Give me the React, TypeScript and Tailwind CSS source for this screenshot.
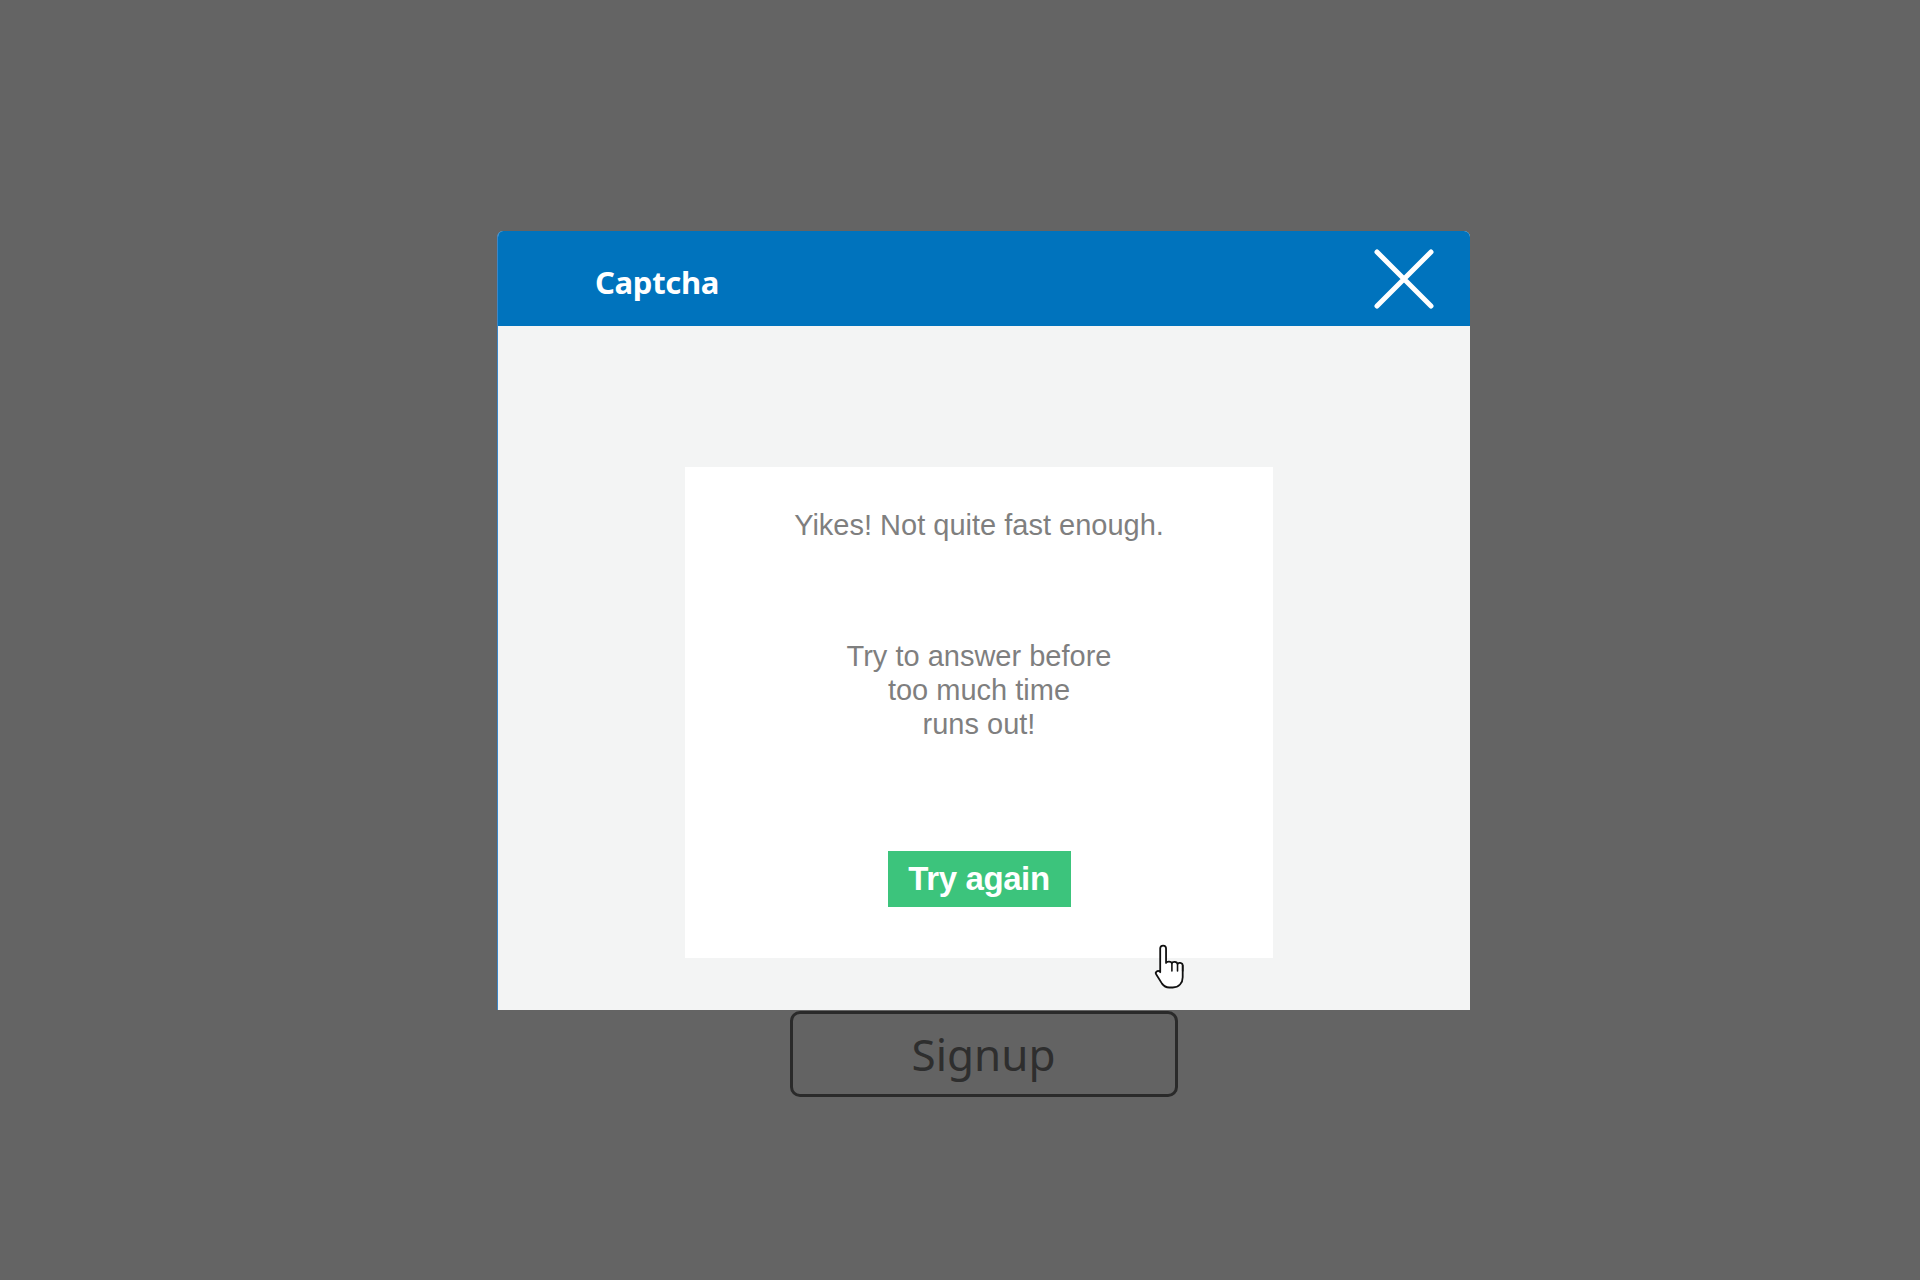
import React from "react";

function HandCursor() {
    return (
        <svg width="36" height="50" viewBox="0 0 16 22" className="absolute left-[1153px] top-[942px]">
            <path
                d="M4.5 1.5c.8 0 1.3.6 1.3 1.3v6.4c.2-.8 2.4-.9 2.6.2.2-.9 2.3-.9 2.5.3.3-.8 2.2-.7 2.3.6v5.2c0 2.6-1.7 4.6-4.4 4.6H7.2c-1.4 0-2.4-.6-3.2-1.7L1.4 14.2c-.6-.9.7-2 1.6-1.1l.2.2V2.8c0-.7.5-1.3 1.3-1.3z"
                fill="#fff"
                stroke="#111"
                strokeWidth="0.8"
                strokeLinejoin="round"
            />
            <path d="M8.4 9.6v3.2M10.9 10v2.8M13.2 10.4v2.4" stroke="#111" strokeWidth="0.7" strokeLinecap="round" />
        </svg>
    );
}

export default function App() {
    return (
        <div className="relative min-h-[1280px] w-full bg-[#646464] overflow-hidden">
            <div className="ml-[497px] w-[973px] pt-[231px] flex flex-col items-center">
                {/* Captcha dialog */}
                <div className="w-full rounded-t-[6px] overflow-hidden bg-[#f3f4f4] border-l border-[#3d86c6]">
                    <div className="h-[95px] bg-[#0073bd] flex items-center justify-between pl-[97px] pr-[36px]">
                        <span className="pt-[8px] text-white text-[31px] font-bold tracking-[-0.3px] font-['Noto_Sans','Open_Sans',sans-serif]">
                            Captcha
                        </span>
                        <svg width="60" height="60" viewBox="0 0 60 60">
                            <path d="M3 3L57 57M57 3L3 57" stroke="#fff" strokeWidth="5" strokeLinecap="round" />
                        </svg>
                    </div>
                    <div className="h-[684px] pt-[141px] pl-[187px]">
                        <div className="w-[588px] h-[491px] bg-white flex flex-col items-center text-[#7f7f7f] font-['Liberation_Sans',Arial,sans-serif]">
                            <p className="mt-[41px] text-[29px] leading-[34px]">
                                Yikes! Not quite fast enough.
                            </p>
                            <p className="mt-[97px] text-[29px] leading-[34px] text-center">
                                Try to answer before
                                <br />
                                too much time
                                <br />
                                runs out!
                            </p>
                            <button className="mt-[110px] w-[183px] h-[56px] bg-[#3cc47c] text-white text-[33px] font-bold tracking-[-0.4px] font-['Liberation_Sans',Arial,sans-serif]">
                                Try again
                            </button>
                        </div>
                    </div>
                </div>

                {/* Signup button under the dialog */}
                <button className="mt-[1px] w-[388px] h-[86px] rounded-[10px] border-[3px] border-[#2a2a2a] bg-[#636363] text-[#2e2e2e] text-[44px] font-['Noto_Sans','Open_Sans',sans-serif] flex items-center justify-center">
                    Signup
                </button>
            </div>

            <HandCursor />
        </div>
    );
}
